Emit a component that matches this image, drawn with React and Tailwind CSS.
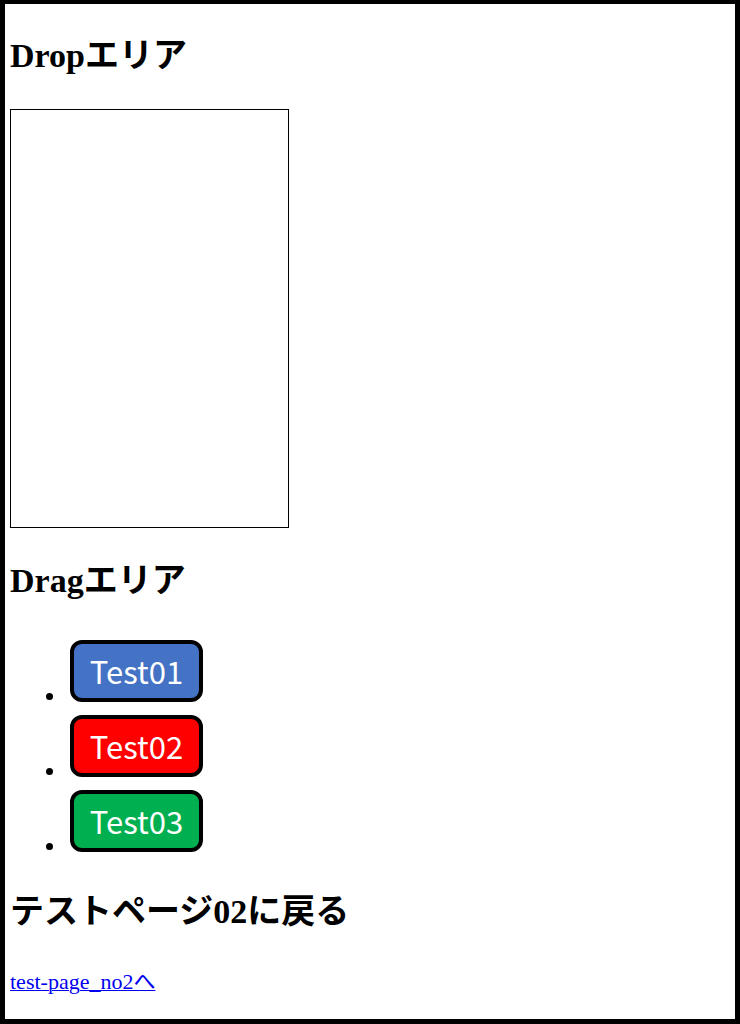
const DRAG_ITEMS = [
  { id: 'test01', label: 'Test01', bg: 'bg-[#4472c4]' },
  { id: 'test02', label: 'Test02', bg: 'bg-[#ff0000]' },
  { id: 'test03', label: 'Test03', bg: 'bg-[#00b050]' },
];

function Heading({ children }) {
  return <h2 className="text-[34px] leading-[50px] font-bold">{children}</h2>;
}

function DragItem({ item }) {
  const handleDragStart = (e) => {
    e.dataTransfer.setData('text/plain', item.id);
  };

  return (
    <li>
      <div
        id={item.id}
        draggable
        onDragStart={handleDragStart}
        className={`inline-block overflow-hidden w-[133px] h-[62px] mt-[6px] mb-px ml-1 rounded-xl border-4 border-black text-center text-white text-[31px] leading-[54px] font-['Noto_Sans_CJK_JP',sans-serif] ${item.bg}`}
      >
        {item.label}
      </div>
    </li>
  );
}

export default function App() {
  return (
    <main className="min-h-screen border-[5px] border-t-4 border-black bg-white pt-[27px] pb-5 px-[5px] text-[22px] leading-[26px] text-black font-['Liberation_Serif','Noto_Sans_CJK_JP',serif]">
      <Heading>Dropエリア</Heading>
      <div
        onDragOver={(e) => e.preventDefault()}
        className="my-7 w-[279px] h-[419px] border border-black"
      />

      <Heading>Dragエリア</Heading>
      <ul className="my-7 pl-14 list-disc">
        {DRAG_ITEMS.map((item) => (
          <DragItem key={item.id} item={item} />
        ))}
      </ul>

      <Heading>テストページ02に戻る</Heading>
      <p className="mt-7 leading-[33px]">
        <a href="#test-page_no2" className="text-[#0000ee] underline decoration-1">
          test-page_no2へ
        </a>
      </p>
    </main>
  );
}
